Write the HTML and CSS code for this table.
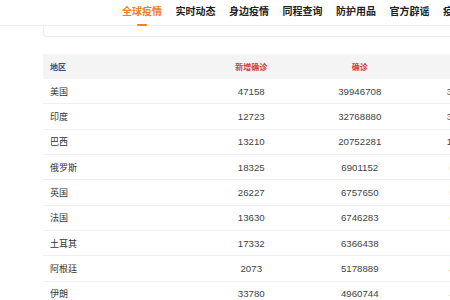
FILE: index.html
```html
<!DOCTYPE html>
<html lang="zh">
<head>
<meta charset="utf-8">
<link rel="stylesheet" href="styles.css">
</head>
<body>
<nav class="nav">
  <span class="nav-item active">全球疫情</span>
  <span class="nav-item">实时动态</span>
  <span class="nav-item">身边疫情</span>
  <span class="nav-item">同程查询</span>
  <span class="nav-item">防护用品</span>
  <span class="nav-item">官方辟谣</span>
  <span class="nav-item">疫苗接种</span>
</nav>
<div class="card"></div>
<table class="data">
  <colgroup>
    <col class="c-region"><col class="c-num"><col class="c-num"><col class="c-num">
  </colgroup>
  <thead>
    <tr><th class="h-region">地区</th><th class="h-red">新增确诊</th><th class="h-red">确诊</th><th class="h-red">治愈</th></tr>
  </thead>
  <tbody>
    <tr><td>美国</td><td>47158</td><td>39946708</td><td>30893527</td></tr>
    <tr><td>印度</td><td>12723</td><td>32768880</td><td>31976125</td></tr>
    <tr><td>巴西</td><td>13210</td><td>20752281</td><td>19694595</td></tr>
    <tr><td>俄罗斯</td><td>18325</td><td>6901152</td><td>6179802</td></tr>
    <tr><td>英国</td><td>26227</td><td>6757650</td><td>5266230</td></tr>
    <tr><td>法国</td><td>13630</td><td>6746283</td><td>6216380</td></tr>
    <tr><td>土耳其</td><td>17332</td><td>6366438</td><td>5911211</td></tr>
    <tr><td>阿根廷</td><td>2073</td><td>5178889</td><td>4852718</td></tr>
    <tr><td>伊朗</td><td>33780</td><td>4960744</td><td>4218468</td></tr>
  </tbody>
</table>
</body>
</html>
```
FILE: styles.css
```css
html, body {
  margin: 0;
  padding: 0;
  background: #fff;
  overflow: hidden;
  width: 450px;
  height: 300px;
}
body {
  font-family: "Liberation Sans", "Noto Sans CJK SC", sans-serif;
  color: #333;
}
.nav {
  display: flex;
  gap: 13.5px;
  padding-left: 122px;
  height: 26px;
  border-bottom: 1px solid #eeeeee;
  box-sizing: border-box;
  white-space: nowrap;
}
.nav-item {
  position: relative;
  flex: none;
  font-family: "Noto Sans CJK SC", sans-serif;
  font-size: 10px;
  font-weight: 700;
  line-height: 10px;
  padding-top: 6px;
  color: #222;
}
.nav-item.active {
  color: #f57c1f;
}
.nav-item.active::after {
  content: "";
  position: absolute;
  left: 15px;
  top: 24px;
  width: 10px;
  height: 2px;
  background: #f57c1f;
  border-radius: 1px;
}
.card {
  margin-left: 43px;
  height: 10px;
  border: 1px solid #ececec;
  border-top: none;
  border-right: none;
  border-radius: 0 0 0 4px;
}
.data {
  margin-top: 17px;
  margin-left: 43px;
  border-collapse: collapse;
  table-layout: fixed;
  width: 479.5px;
}
.c-region { width: 154px; }
.c-num { width: 108.5px; }
.data th {
  height: 25px;
  background: #f4f4f4;
  font-family: "Noto Sans CJK SC", sans-serif;
  font-size: 8px;
  font-weight: 700;
  text-align: center;
  padding: 0;
}
.data th.h-region {
  text-align: left;
  padding-left: 7px;
  color: #2f4f93;
}
.data th.h-red {
  color: #c9413a;
}
.data td {
  height: 24.33px;
  border-top: 1px solid #f0f0f0;
  font-size: 9.7px;
  color: #444;
  text-align: center;
  padding: 0;
}
.data td:first-child {
  text-align: left;
  padding-left: 7px;
  font-family: "Noto Sans CJK SC", sans-serif;
  font-size: 9px;
  color: #333;
}
.data tbody tr:first-child td {
  border-top: none;
}
```
